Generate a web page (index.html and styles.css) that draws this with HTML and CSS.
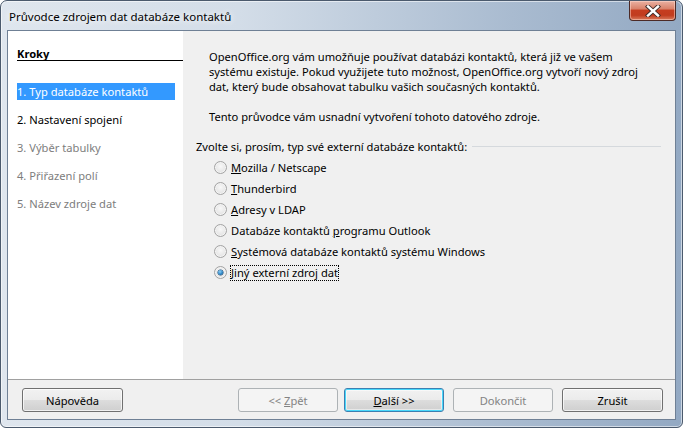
FILE: index.html
```html
<!DOCTYPE html>
<html lang="cs">

<head>
    <meta charset="UTF-8">
    <title>Průvodce zdrojem dat databáze kontaktů</title>
    <link rel="stylesheet" href="styles.css">
</head>

<body>
    <div class="window">
        <div class="titlebar">
            <span class="title">Průvodce zdrojem dat databáze kontaktů</span>
            <div class="close">
                <svg width="18" height="12" viewBox="0 0 18 12">
                    <path d="M4 1.5 L14 10.5 M14 1.5 L4 10.5" stroke="#3a2a28" stroke-width="4.2" stroke-linecap="square" />
                    <path d="M4 1.5 L14 10.5 M14 1.5 L4 10.5" stroke="#ffffff" stroke-width="2.4" stroke-linecap="square" />
                </svg>
            </div>
        </div>

        <div class="client">
            <div class="main">
                <div class="steps">
                    <div class="steps-head">Kroky</div>
                    <ul class="step-list">
                        <li class="step active">1. Typ databáze kontaktů</li>
                        <li class="step">2. Nastavení spojení</li>
                        <li class="step disabled">3. Výběr tabulky</li>
                        <li class="step disabled">4. Přiřazení polí</li>
                        <li class="step disabled">5. Název zdroje dat</li>
                    </ul>
                </div>

                <div class="page">
                    <p class="intro">OpenOffice.org vám umožňuje používat databázi kontaktů, která již ve vašem<br>
                        systému existuje. Pokud využijete tuto možnost, OpenOffice.org vytvoří nový zdroj<br>
                        dat, který bude obsahovat tabulku vašich současných kontaktů.</p>
                    <p class="intro">Tento průvodce vám usnadní vytvoření tohoto datového zdroje.</p>

                    <div class="group">
                        <div class="group-label">
                            <span>Zvolte si, prosím, typ své externí databáze kontaktů:</span>
                            <span class="rule"></span>
                        </div>
                        <ul class="radios">
                            <li class="radio"><span class="dot"></span><span><u>M</u>ozilla / Netscape</span></li>
                            <li class="radio"><span class="dot"></span><span><u>T</u>hunderbird</span></li>
                            <li class="radio"><span class="dot"></span><span><u>A</u>dresy v LDAP</span></li>
                            <li class="radio"><span class="dot"></span><span>Databáze kontaktů <u>p</u>rogramu Outlook</span></li>
                            <li class="radio"><span class="dot"></span><span><u>S</u>ystémová databáze kontaktů systému Windows</span></li>
                            <li class="radio checked"><span class="dot"></span><span class="focus"><u>J</u>iný externí zdroj dat</span></li>
                        </ul>
                    </div>
                </div>
            </div>

            <div class="footer">
                <button class="btn help">Nápověda</button>
                <span class="spacer"></span>
                <button class="btn" disabled>&lt;&lt; <u>Z</u>pět</button>
                <button class="btn default"><u>D</u>alší &gt;&gt;</button>
                <button class="btn" disabled>Dokončit</button>
                <button class="btn cancel">Zrušit</button>
            </div>
        </div>
    </div>
</body>

</html>
```

FILE: styles.css
```css
* {
    box-sizing: border-box;
}

body {
    margin: 0;
    width: 683px;
    height: 428px;
    overflow: hidden;
    font-family: "Noto Sans", sans-serif;
    font-size: 11.15px;
    color: #000;
    background: #fff;
}

.window {
    width: 683px;
    height: 428px;
    border: 1px solid #4b5a6d;
    border-radius: 7px 7px 6px 6px;
    padding: 0 6px 7px 6px;
    background: linear-gradient(to right, #dfe6ee 0%, #d3dde8 35%, #a9bbd0 75%, #93a9c3 100%);
    box-shadow: inset 0 0 0 1px rgba(255, 255, 255, 0.55);
    display: flex;
    flex-direction: column;
}

.titlebar {
    height: 29px;
    display: flex;
    align-items: flex-start;
}

.title {
    padding: 8px 0 0 2px;
    font-size: 11.5px;
    line-height: 15px;
    color: #000;
    text-shadow: 0 0 6px #fff, 0 0 10px rgba(255, 255, 255, 0.8);
}

.close {
    margin-left: auto;
    width: 47px;
    height: 20px;
    border: 1px solid #4c2a26;
    border-top: none;
    border-radius: 0 0 4px 4px;
    background: linear-gradient(#eab1a2 0%, #d9836c 40%, #c53d20 50%, #c13c1f 75%, #d87a5c 100%);
    box-shadow: inset 0 0 0 1px rgba(255, 220, 210, 0.5);
    display: flex;
    align-items: center;
    justify-content: center;
}

.client {
    height: 390px;
    border: 1px solid #6f8095;
    background: #f0f0f0;
    display: flex;
    flex-direction: column;
}

.main {
    height: 348px;
    display: flex;
}

.steps {
    width: 175px;
    background: #fff;
    padding-left: 9px;
}

.steps-head {
    padding-top: 16px;
    line-height: 13px;
    font-weight: bold;
    border-bottom: 1px solid #000;
}

.step-list {
    list-style: none;
    margin: 22px 8px 0 0;
    padding: 0;
}

.step {
    height: 17px;
    line-height: 17px;
    margin-bottom: 11px;
    white-space: nowrap;
}

.step.active {
    background: #3399ff;
    color: #fff;
}

.step.disabled {
    color: #7d7d7d;
}

.page {
    flex: 1;
    padding: 18px 14px 0 26px;
}

.intro {
    margin: 0 0 15px 0;
    line-height: 15px;
    white-space: nowrap;
}

.group {
    margin: 14px 0 0 -13px;
}

.group-label {
    display: flex;
    align-items: center;
    line-height: 15px;
    white-space: nowrap;
}

.rule {
    flex: 1;
    margin-left: 5px;
    border-top: 1px solid #d5d9dd;
}

.radios {
    list-style: none;
    margin: 3px 0 0 0;
    padding-left: 18px;
}

.radio {
    height: 21px;
    display: flex;
    align-items: center;
    gap: 4px;
    white-space: nowrap;
}

.dot {
    width: 13px;
    height: 13px;
    border-radius: 50%;
    border: 1px solid #a3a3a3;
    background: radial-gradient(circle at 50% 40%, #f8f8f8 0%, #e8e8e8 55%, #d6d6d6 100%);
    box-shadow: inset 0 0 0 1px #f4f4f4;
    display: flex;
    align-items: center;
    justify-content: center;
}

.radio.checked .dot::after {
    content: "";
    width: 5px;
    height: 5px;
    border-radius: 50%;
    background: radial-gradient(circle at 40% 35%, #8fd0f5 0%, #2a84c6 55%, #0f3e66 100%);
    box-shadow: 0 0 0 0.5px #194a74;
}

.focus {
    outline: 1px dotted #000;
    line-height: 14px;
}

.footer {
    flex: 1;
    border-top: 1px solid #a0a0a0;
    display: flex;
    align-items: flex-start;
    padding: 8px 12px 0 14px;
}

.spacer {
    flex: 1;
}

.btn {
    width: 100px;
    height: 24px;
    margin-left: 9px;
    padding: 0;
    font-family: "Noto Sans", sans-serif;
    font-size: 11.15px;
    color: #000;
    border: 1px solid #707070;
    border-radius: 3px;
    background: linear-gradient(#f2f2f2 0%, #ebebeb 50%, #dddddd 50%, #cfcfcf 100%);
    box-shadow: inset 0 0 0 1px rgba(255, 255, 255, 0.7);
}

.btn.help {
    width: 101px;
    margin-left: 0;
}

.spacer + .btn {
    margin-left: 0;
}

.btn.default {
    margin-left: 6px;
    border-color: #3c7fb1;
    box-shadow: inset 0 0 0 1px #48d8fb, inset 0 0 0 2px rgba(255, 255, 255, 0.5);
}

.btn.cancel {
    width: 101px;
}

.btn:disabled {
    color: #838383;
    border-color: #adb2b5;
    background: #f4f4f4;
    box-shadow: none;
}
```
